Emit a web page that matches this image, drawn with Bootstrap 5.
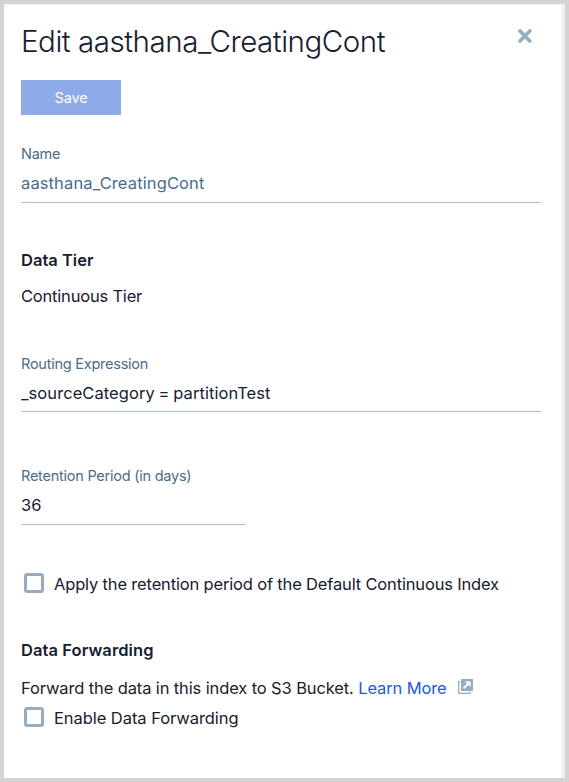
<!DOCTYPE html>
<html lang="en">
<head>
<meta charset="utf-8">
<meta name="viewport" content="width=device-width, initial-scale=1">
<title>Edit aasthana_CreatingCont</title>
<link href="https://cdn.jsdelivr.net/npm/bootstrap@5.3.0/dist/css/bootstrap.min.css" rel="stylesheet">
<style>
body { font-family: Inter, "Liberation Sans", sans-serif; font-size: 16.5px; line-height: 24px; color: #17202f; background: #d4d4d4; }
.panel-frame { height: 782px; padding: 4px; }
.panel-body { background: #fff; border-top: 1px solid #edf1f1; border-right: 4px solid #edf1f1; padding: 16px 20px 0 17px; }
.panel-title { font-size: 29.5px; font-weight: 300; line-height: 40px; letter-spacing: -.46px; white-space: nowrap; }
.close-btn { width: 15px; height: 15px; margin: 7px 9px 0 0; }
.btn-save { width: 100px; height: 35px; margin-top: 19px; background: #8faae8; color: #fff; font-size: 14.5px; line-height: 35px; letter-spacing: -.1px; }
.field-label { font-size: 14.5px; line-height: 20px; letter-spacing: -.24px; color: #4a6d8a; }
.field-input { height: 39px; padding: 7px 0; font-size: 16.5px; line-height: 24px; color: #17202f; border-bottom: 1px solid #a6c0d3 !important; }
.field-input:disabled { color: #4a6d8a; background: transparent; }
.name-field { margin-top: 29px; }
.name-field .field-input { letter-spacing: .12px; }
.tier { margin-top: 45px; }
.tier h2, .forwarding h2 { font-size: 16.5px; font-weight: 600; line-height: 24px; }
.forwarding h2 { letter-spacing: .08px; }
.tier p { margin-top: 12px; letter-spacing: -.2px; }
.routing-field { margin-top: 46px; }
.routing-field .field-input { height: 38px; letter-spacing: .07px; word-spacing: -1px; }
.retention-field { margin-top: 54px; width: 225px; }
.check-row { height: 24px; padding-left: 3px; gap: 10px; white-space: nowrap; }
.check-row .form-check-input { width: 20px; height: 20px; margin: 0 0 2px; border: 3px solid #94adc3; border-radius: 3px; }
.apply-row { margin-top: 47px; letter-spacing: -.165px; }
.forwarding { margin-top: 42px; }
.forwarding p { margin-top: 14px; color: #222; white-space: nowrap; letter-spacing: -.125px; }
.learn-link { color: #1d58d8; }
.external { margin: 3px 0 0 11px; }
.enable-row { margin-top: 6px; letter-spacing: -.06px; }
</style>
<script src="https://cdn.jsdelivr.net/npm/bootstrap@5.3.0/dist/js/bootstrap.bundle.min.js"></script>
</head>
<body>
<div class="panel-frame">
<main class="panel-body h-100">
  <header class="d-flex justify-content-between align-items-start">
    <h1 class="panel-title mb-0">Edit aasthana_CreatingCont</h1>
    <button type="button" class="close-btn btn p-0 border-0 d-flex" aria-label="Close">
      <svg width="15" height="15" viewBox="0 0 15 15" stroke="#94adc3" stroke-width="3.6" stroke-linecap="round"><path d="M3 2.9 12.8 13M12.8 2.9 3 13"/></svg>
    </button>
  </header>
  <form>
    <button type="button" class="btn-save btn rounded-0 border-0 p-0 d-block">Save</button>
    <div class="name-field">
      <label class="field-label d-block" for="name">Name</label>
      <input id="name" class="field-input form-control rounded-0 border-0" value="aasthana_CreatingCont" disabled>
    </div>
    <section class="tier">
      <h2 class="mb-0">Data Tier</h2>
      <p class="mb-0">Continuous Tier</p>
    </section>
    <div class="routing-field">
      <label class="field-label d-block" for="routing">Routing Expression</label>
      <input id="routing" class="field-input form-control rounded-0 border-0" value="_sourceCategory = partitionTest">
    </div>
    <div class="retention-field">
      <label class="field-label d-block" for="retention">Retention Period (in days)</label>
      <input id="retention" class="field-input form-control rounded-0 border-0" value="36">
    </div>
    <div class="check-row apply-row d-flex align-items-center">
      <input id="apply" class="form-check-input" type="checkbox">
      <label for="apply">Apply the retention period of the Default Continuous Index</label>
    </div>
    <section class="forwarding">
      <h2 class="mb-0">Data Forwarding</h2>
      <p class="mb-0 d-flex">Forward the data in this index to S3 Bucket.&nbsp;<a href="#" class="learn-link text-decoration-none">Learn More</a>
        <svg class="external" width="15" height="15" viewBox="0 0 15 15" fill="none"><path d="M2.4 2.6H.7v11.7h11.2v-1.7" stroke="#94adc3" stroke-width="1.3"/><path d="M3 0h12v12H3z" fill="#94adc3"/><path d="M5.6 9.4 10.6 4.4" stroke="#fff" stroke-width="2"/><path d="M7 2.4h5.6V8z" fill="#fff"/></svg>
      </p>
      <div class="check-row enable-row d-flex align-items-center">
        <input id="enable" class="form-check-input" type="checkbox">
        <label for="enable">Enable Data Forwarding</label>
      </div>
    </section>
  </form>
</main>
</div>
</body>
</html>
